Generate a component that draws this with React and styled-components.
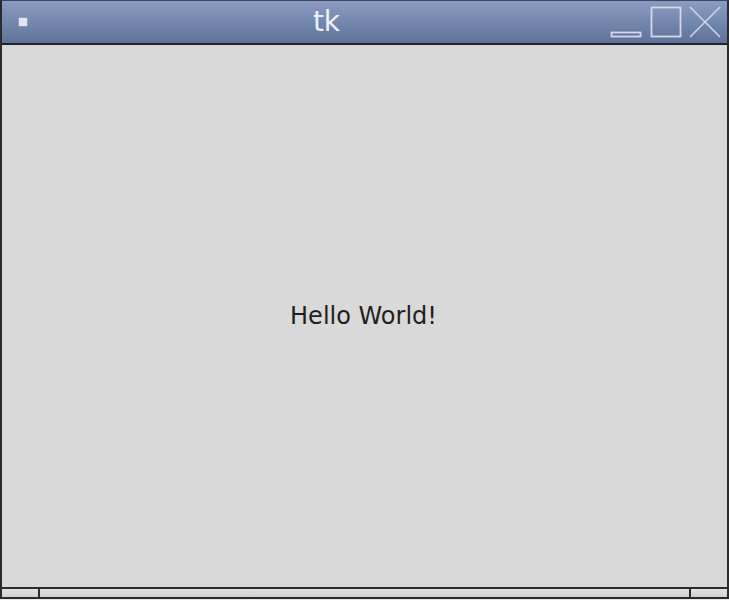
import React from "react";
import styled, { createGlobalStyle } from "styled-components";

const Global = createGlobalStyle`
  html, body { margin: 0; padding: 0; background: #e8e8e8; }
  #root { width: 729px; height: 600px; }
`;

const Frame = styled.div`
  box-sizing: border-box;
  width: 729px;
  height: 599px;
  display: flex;
  flex-direction: column;
  border-left: 2px solid #2b2b2b;
  border-right: 2px solid #2b2b2b;
  border-top: 1px solid #3c4660;
  background: #d9d9d9;
`;

const TitleBar = styled.div`
  height: 42px;
  flex: none;
  display: grid;
  grid-template-columns: 40px 1fr auto;
  align-items: stretch;
  background: linear-gradient(#8a9cc1, #5e7298);
  border-bottom: 2px solid #1e2230;
`;

const MenuIcon = styled.div`
  display: flex;
  align-items: center;
  justify-content: center;
  padding-left: 2px;
  &::before {
    content: "";
    width: 8px;
    height: 8px;
    background: #e4e3f3;
    box-shadow: 0 0 1px #fff;
  }
`;

const Title = styled.div`
  display: flex;
  align-items: center;
  justify-content: center;
  padding-left: 4px;
  padding-bottom: 2px;
  font-family: "DejaVu Sans", sans-serif;
  font-size: 28px;
  color: #edf0f6;
`;

const Buttons = styled.div`
  display: flex;
  align-items: stretch;
`;

const Btn = styled.svg`
  display: block;
  width: 40px;
  height: 42px;
`;

const Content = styled.div`
  flex: 1;
  display: flex;
  align-items: center;
  justify-content: center;
  padding-right: 2px;
`;

const Label = styled.span`
  font-family: "DejaVu Sans", sans-serif;
  font-size: 24px;
  color: #1f1f1f;
`;

const Grip = styled.div`
  flex: none;
  height: 8px;
  display: grid;
  grid-template-columns: 36px 1fr 38px;
  border-top: 2px solid #2b2b2b;
  border-bottom: 2px solid #2b2b2b;
  background: linear-gradient(#e2e2e2, #d0d0d0);
`;

const GripCell = styled.div`
  border-left: ${(p) => (p.$divider ? "2px solid #2b2b2b" : "none")};
`;

const stroke = "#d3d8ea";

export default function App() {
  return (
    <>
      <Global />
      <Frame>
        <TitleBar>
          <MenuIcon />
          <Title>tk</Title>
          <Buttons>
            <Btn viewBox="0 0 40 42">
              <rect x="4.5" y="31.5" width="29" height="4" fill="none" stroke={stroke} strokeWidth="1.8" />
            </Btn>
            <Btn viewBox="0 0 40 42">
              <rect x="4.5" y="6.5" width="29" height="29" fill="none" stroke={stroke} strokeWidth="1.8" />
            </Btn>
            <Btn viewBox="0 0 40 42">
              <line x1="3" y1="6" x2="33" y2="36" stroke={stroke} strokeWidth="1.5" />
              <line x1="33" y1="6" x2="3" y2="36" stroke={stroke} strokeWidth="1.5" />
            </Btn>
          </Buttons>
        </TitleBar>
        <Content>
          <Label>Hello World!</Label>
        </Content>
        <Grip>
          <GripCell />
          <GripCell $divider />
          <GripCell $divider />
        </Grip>
      </Frame>
    </>
  );
}
